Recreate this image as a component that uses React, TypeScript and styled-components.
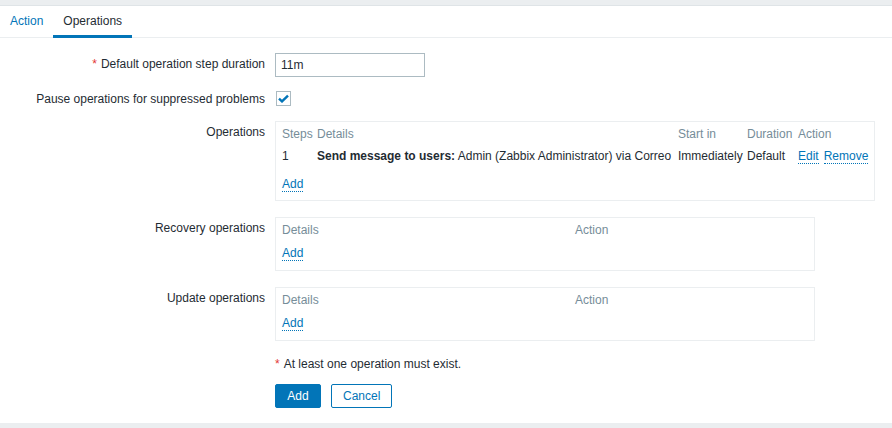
import styled, { createGlobalStyle } from "styled-components";

const GlobalStyle = createGlobalStyle`
  html, body {
    margin: 0;
    padding: 0;
    background: #ebeef0;
  }
  body {
    font-family: Arial, "Liberation Sans", sans-serif;
    font-size: 12px;
    line-height: 14px;
    color: #1f2c33;
  }
`;

const Page = styled.div`
  padding: 5px 0 5px;
  height: 428px;
  box-sizing: border-box;
`;

const Panel = styled.div`
  background: #ffffff;
  border-top: 1px solid #dfe4e7;
  height: 100%;
  box-sizing: border-box;
`;

const TabBar = styled.ul`
  display: flex;
  margin: 0;
  padding: 0;
  list-style: none;
  height: 31px;
  border-bottom: 1px solid #ebeef0;
`;

const Tab = styled.li<{ $active?: boolean }>`
  padding: 8px 10px 0;
  box-sizing: border-box;
  color: ${(p) => (p.$active ? "#1f2c33" : "#0275b8")};
  border-bottom: 3px solid ${(p) => (p.$active ? "#0275b8" : "transparent")};
  margin-bottom: -1px;
  height: 32px;
`;

const Form = styled.div`
  padding-top: 15px;
`;

const Row = styled.div<{ $gap?: number }>`
  display: grid;
  grid-template-columns: 265px 1fr;
  column-gap: 10px;
  margin-bottom: ${(p) => p.$gap ?? 10}px;
`;

const Label = styled.label<{ $top?: number }>`
  text-align: right;
  padding-top: ${(p) => p.$top ?? 4}px;
  color: #1f2c33;
`;

const Req = styled.span`
  color: #e33734;
  margin-right: 4px;
`;

const Field = styled.div`
  display: flex;
  align-items: flex-start;
  min-height: 24px;
`;

const TextInput = styled.div`
  width: 150px;
  height: 24px;
  box-sizing: border-box;
  border: 1px solid #acbbc2;
  padding: 4px 5px;
  background: #fff;
`;

const CheckBox = styled.div`
  width: 15px;
  height: 15px;
  margin: 4px 0 0 1px;
  box-sizing: border-box;
  border: 1px solid #acbbc2;
  display: flex;
  align-items: center;
  justify-content: center;
`;

const Box = styled.div<{ $width: number; $pb?: number }>`
  width: ${(p) => p.$width}px;
  box-sizing: border-box;
  border: 1px solid #ebeef0;
  padding: 5px 5px ${(p) => p.$pb ?? 9}px 6px;
`;

const Table = styled.table`
  border-collapse: collapse;
  table-layout: fixed;
  width: 100%;
`;

const Th = styled.th<{ $w?: number; $pb?: number }>`
  text-align: left;
  font-weight: normal;
  color: #768d99;
  padding: 0 0 ${(p) => p.$pb ?? 8}px 0;
  white-space: nowrap;
  width: ${(p) => (p.$w ? `${p.$w}px` : "auto")};
`;

const Td = styled.td<{ $pb?: number }>`
  padding: 0 0 ${(p) => p.$pb ?? 14}px 0;
  white-space: nowrap;
  vertical-align: top;
`;

const Link = styled.a`
  color: #0275b8;
  text-decoration: none;
  border-bottom: 1px dotted #0275b8;
  cursor: pointer;
  & + & {
    margin-left: 5px;
  }
`;

const Note = styled.div``;

const Buttons = styled.div`
  display: flex;
  gap: 10px;
`;

const Button = styled.button<{ $alt?: boolean }>`
  height: 24px;
  padding: 0 ${(p) => (p.$alt ? 11 : 10)}px;
  font: inherit;
  border-radius: 2px;
  border: 1px solid #0275b8;
  background: ${(p) => (p.$alt ? "#ffffff" : "#0275b8")};
  color: ${(p) => (p.$alt ? "#0275b8" : "#ffffff")};
  min-width: 46px;
`;

function SimpleOps() {
  return (
    <Box $width={540}>
      <Table>
        <thead>
          <tr>
            <Th $w={293} $pb={9}>
              Details
            </Th>
            <Th $pb={9}>Action</Th>
          </tr>
        </thead>
        <tbody>
          <tr>
            <Td $pb={1} colSpan={2}>
              <Link>Add</Link>
            </Td>
          </tr>
        </tbody>
      </Table>
    </Box>
  );
}

export default function App() {
  return (
    <>
      <GlobalStyle />
      <Page>
        <Panel>
          <TabBar>
            <Tab>Action</Tab>
            <Tab $active>Operations</Tab>
          </TabBar>
          <Form>
            <Row>
              <Label>
                <Req>*</Req>Default operation step duration
              </Label>
              <Field>
                <TextInput>11m</TextInput>
              </Field>
            </Row>
            <Row>
              <Label $top={5}>Pause operations for suppressed problems</Label>
              <Field>
                <CheckBox>
                  <svg width="11" height="9" viewBox="0 0 11 9">
                    <path
                      d="M1 4.6 L4 7.4 L10 1.6"
                      fill="none"
                      stroke="#0275b8"
                      strokeWidth="2.4"
                    />
                  </svg>
                </CheckBox>
              </Field>
            </Row>
            <Row $gap={16}>
              <Label>Operations</Label>
              <Field>
                <Box $width={600} $pb={8}>
                  <Table>
                    <thead>
                      <tr>
                        <Th $w={35}>Steps</Th>
                        <Th $w={361}>Details</Th>
                        <Th $w={69}>Start in</Th>
                        <Th $w={51}>Duration</Th>
                        <Th>Action</Th>
                      </tr>
                    </thead>
                    <tbody>
                      <tr>
                        <Td>1</Td>
                        <Td>
                          <b>Send message to users:</b> Admin (Zabbix
                          Administrator) via Correo
                        </Td>
                        <Td>Immediately</Td>
                        <Td>Default</Td>
                        <Td>
                          <Link>Edit</Link>
                          <Link>Remove</Link>
                        </Td>
                      </tr>
                      <tr>
                        <Td $pb={1} colSpan={5}>
                          <Link>Add</Link>
                        </Td>
                      </tr>
                    </tbody>
                  </Table>
                </Box>
              </Field>
            </Row>
            <Row $gap={16}>
              <Label>Recovery operations</Label>
              <Field>
                <SimpleOps />
              </Field>
            </Row>
            <Row $gap={16}>
              <Label>Update operations</Label>
              <Field>
                <SimpleOps />
              </Field>
            </Row>
            <Row $gap={13}>
              <div />
              <Note>
                <Req>*</Req>At least one operation must exist.
              </Note>
            </Row>
            <Row>
              <div />
              <Buttons>
                <Button>Add</Button>
                <Button $alt>Cancel</Button>
              </Buttons>
            </Row>
          </Form>
        </Panel>
      </Page>
    </>
  );
}
